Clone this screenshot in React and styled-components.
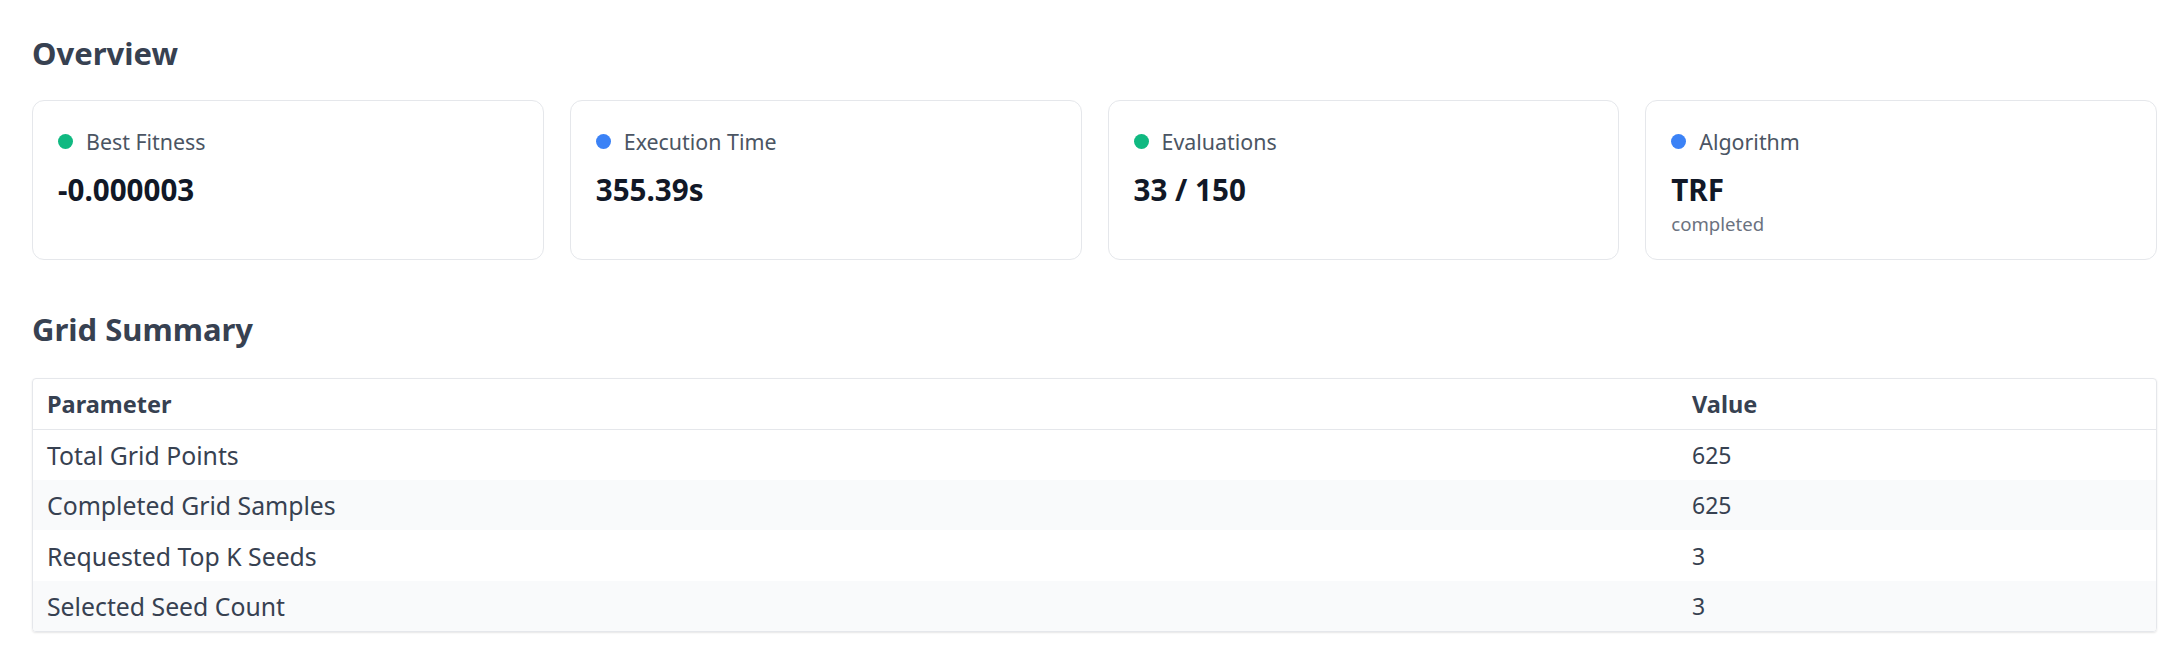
import React from 'react'
import styled, { createGlobalStyle } from 'styled-components'

const GlobalStyle = createGlobalStyle`
  * { box-sizing: border-box; }
  body {
    margin: 0;
    background: #ffffff;
    font-family: "Noto Sans", "Open Sans", Arial, sans-serif;
  }
`;

const stats = [
    { label: 'Best Fitness', value: '-0.000003', tone: 'green' },
    { label: 'Execution Time', value: '355.39s', tone: 'blue' },
    { label: 'Evaluations', value: '33 / 150', tone: 'green' },
    { label: 'Algorithm', value: 'TRF', tone: 'blue', note: 'completed' },
];

const gridRows = [
    ['Total Grid Points', '625'],
    ['Completed Grid Samples', '625'],
    ['Requested Top K Seeds', '3'],
    ['Selected Seed Count', '3'],
];

const App = () => {
    return (
        <>
            <GlobalStyle />
            <Page>
                <SectionTitle>Overview</SectionTitle>
                <CardGrid>
                    {stats.map((s) => (
                        <StatCard key={s.label}>
                            <StatLabel>
                                <Dot $tone={s.tone} />
                                {s.label}
                            </StatLabel>
                            <StatValue>{s.value}</StatValue>
                            {s.note && <StatNote>{s.note}</StatNote>}
                        </StatCard>
                    ))}
                </CardGrid>

                <SectionTitle $spaced>Grid Summary</SectionTitle>
                <TableWrap>
                    <Table>
                        <thead>
                            <tr>
                                <Th $first>Parameter</Th>
                                <Th>Value</Th>
                            </tr>
                        </thead>
                        <tbody>
                            {gridRows.map(([name, val], i) => (
                                <Row key={name} $striped={i % 2 === 1}>
                                    <Td>{name}</Td>
                                    <ValueTd>{val}</ValueTd>
                                </Row>
                            ))}
                        </tbody>
                    </Table>
                </TableWrap>
            </Page>
        </>
    )
}

const Page = styled.div`
    padding: 35px 21px 24px 32px;
`;

const SectionTitle = styled.h2`
    margin: ${(props) => (props.$spaced ? '51px' : '0')} 0 ${(props) => (props.$spaced ? '30px' : '28px')};
    font-size: 31px;
    line-height: 1.2;
    font-weight: 700;
    color: #374151;
`;

const CardGrid = styled.div`
    display: grid;
    grid-template-columns: repeat(4, 1fr);
    gap: 26px;
`;

const StatCard = styled.div`
    border: 1px solid #e5e7eb;
    border-radius: 12px;
    background: #fff;
    padding: 25px 25px 22px 25px;
    min-height: 160px;
`;

const StatLabel = styled.div`
    display: flex;
    align-items: center;
    gap: 13px;
    font-size: 21.4px;
    line-height: 31px;
    color: #4b5563;
`;

const Dot = styled.span`
    width: 15px;
    height: 15px;
    border-radius: 50%;
    flex: none;
    background: ${(props) => (props.$tone === 'green' ? '#10b981' : '#3b82f6')};
`;

const StatValue = styled.div`
    margin-top: 14px;
    font-size: 29.6px;
    line-height: 38px;
    font-weight: 700;
    color: #111827;
`;

const StatNote = styled.div`
    margin-top: 1px;
    font-size: 18.6px;
    line-height: 27px;
    color: #6b7280;
`;

const TableWrap = styled.div`
    border: 1px solid #e5e7eb;
    border-radius: 4px;
    overflow: hidden;
    box-shadow: 0 1px 2px rgba(0, 0, 0, 0.1);
`;

const Table = styled.table`
    width: 100%;
    border-collapse: collapse;
    table-layout: fixed;
`;

const Th = styled.th`
    width: ${(props) => (props.$first ? '1645px' : 'auto')};
    height: 50px;
    padding: 0 14px;
    text-align: left;
    font-size: 23.5px;
    font-weight: 700;
    color: #374151;
    border-bottom: 1px solid #e5e7eb;
`;

const Row = styled.tr`
    background: ${(props) => (props.$striped ? '#f9fafb' : '#fff')};
    & + & td { border-top: 1px solid #e5e7eb; }
`;

const Td = styled.td`
    height: 50.5px;
    padding: 0 14px;
    font-size: 24.8px;
    color: #374151;
`;

const ValueTd = styled(Td)`
    font-size: 23px;
`;

export default App
